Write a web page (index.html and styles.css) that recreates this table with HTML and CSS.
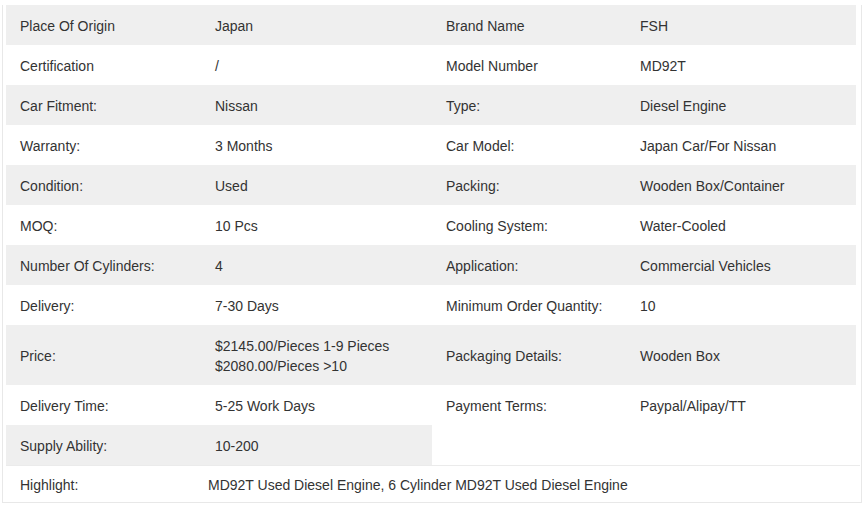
FILE: index.html
```html
<!DOCTYPE html>
<html>
<head>
<meta charset="utf-8">
<link rel="stylesheet" href="styles.css">
</head>
<body>
<div class="specs">
  <div class="row alt">
    <div class="pair"><span class="lbl">Place Of Origin</span><span class="val">Japan</span></div>
    <div class="pair"><span class="lbl">Brand Name</span><span class="val">FSH</span></div>
  </div>
  <div class="row">
    <div class="pair"><span class="lbl">Certification</span><span class="val">/</span></div>
    <div class="pair"><span class="lbl">Model Number</span><span class="val">MD92T</span></div>
  </div>
  <div class="row alt">
    <div class="pair"><span class="lbl">Car Fitment:</span><span class="val">Nissan</span></div>
    <div class="pair"><span class="lbl">Type:</span><span class="val">Diesel Engine</span></div>
  </div>
  <div class="row">
    <div class="pair"><span class="lbl">Warranty:</span><span class="val">3 Months</span></div>
    <div class="pair"><span class="lbl">Car Model:</span><span class="val">Japan Car/For Nissan</span></div>
  </div>
  <div class="row alt">
    <div class="pair"><span class="lbl">Condition:</span><span class="val">Used</span></div>
    <div class="pair"><span class="lbl">Packing:</span><span class="val">Wooden Box/Container</span></div>
  </div>
  <div class="row">
    <div class="pair"><span class="lbl">MOQ:</span><span class="val">10 Pcs</span></div>
    <div class="pair"><span class="lbl">Cooling System:</span><span class="val">Water-Cooled</span></div>
  </div>
  <div class="row alt">
    <div class="pair"><span class="lbl">Number Of Cylinders:</span><span class="val">4</span></div>
    <div class="pair"><span class="lbl">Application:</span><span class="val">Commercial Vehicles</span></div>
  </div>
  <div class="row">
    <div class="pair"><span class="lbl">Delivery:</span><span class="val">7-30 Days</span></div>
    <div class="pair"><span class="lbl">Minimum Order Quantity:</span><span class="val">10</span></div>
  </div>
  <div class="row alt tall">
    <div class="pair"><span class="lbl">Price:</span><span class="val">$2145.00/Pieces 1-9 Pieces<br>$2080.00/Pieces &gt;10</span></div>
    <div class="pair"><span class="lbl">Packaging Details:</span><span class="val">Wooden Box</span></div>
  </div>
  <div class="row">
    <div class="pair"><span class="lbl">Delivery Time:</span><span class="val">5-25 Work Days</span></div>
    <div class="pair"><span class="lbl">Payment Terms:</span><span class="val">Paypal/Alipay/TT</span></div>
  </div>
  <div class="row alt">
    <div class="pair"><span class="lbl">Supply Ability:</span><span class="val">10-200</span></div>
    <div class="pair empty"></div>
  </div>
  <div class="highlight">
    <span class="hl-lbl">Highlight:</span><span class="hl-val">MD92T Used Diesel Engine, 6 Cylinder MD92T Used Diesel Engine</span>
  </div>
</div>
</body>
</html>
```
FILE: styles.css
```css
html, body {
  margin: 0;
  padding: 0;
  background: #fff;
}
body {
  font-family: "Liberation Sans", Arial, sans-serif;
  font-size: 14px;
  color: #333;
}
.specs {
  margin: 5px 0 0 2px;
  width: 854px;
  padding: 0 1px 0 3px;
  border: 1px solid #e8e8e8;
  border-top: none;
}
.row {
  display: grid;
  grid-template-columns: 426px 424px;
  height: 40px;
}
.row.tall {
  height: 60px;
}
.pair {
  display: flex;
  align-items: center;
  padding-top: 2px;
}
.row.alt .pair {
  background: #efefef;
}
.row.alt .pair.empty {
  background: #fff;
}
.lbl {
  width: 181px;
  padding-left: 14px;
  flex: none;
}
.pair + .pair .lbl {
  width: 180px;
}
.val {
  padding-left: 14px;
  line-height: 20px;
}
.highlight {
  display: flex;
  align-items: center;
  height: 36px;
  padding-top: 2px;
  box-sizing: border-box;
  height: 37px;
  border-top: 1px solid #ebebeb;
}
.hl-lbl {
  width: 188px;
  padding-left: 14px;
  flex: none;
}
.hl-val {
  padding-left: 0;
}
```
